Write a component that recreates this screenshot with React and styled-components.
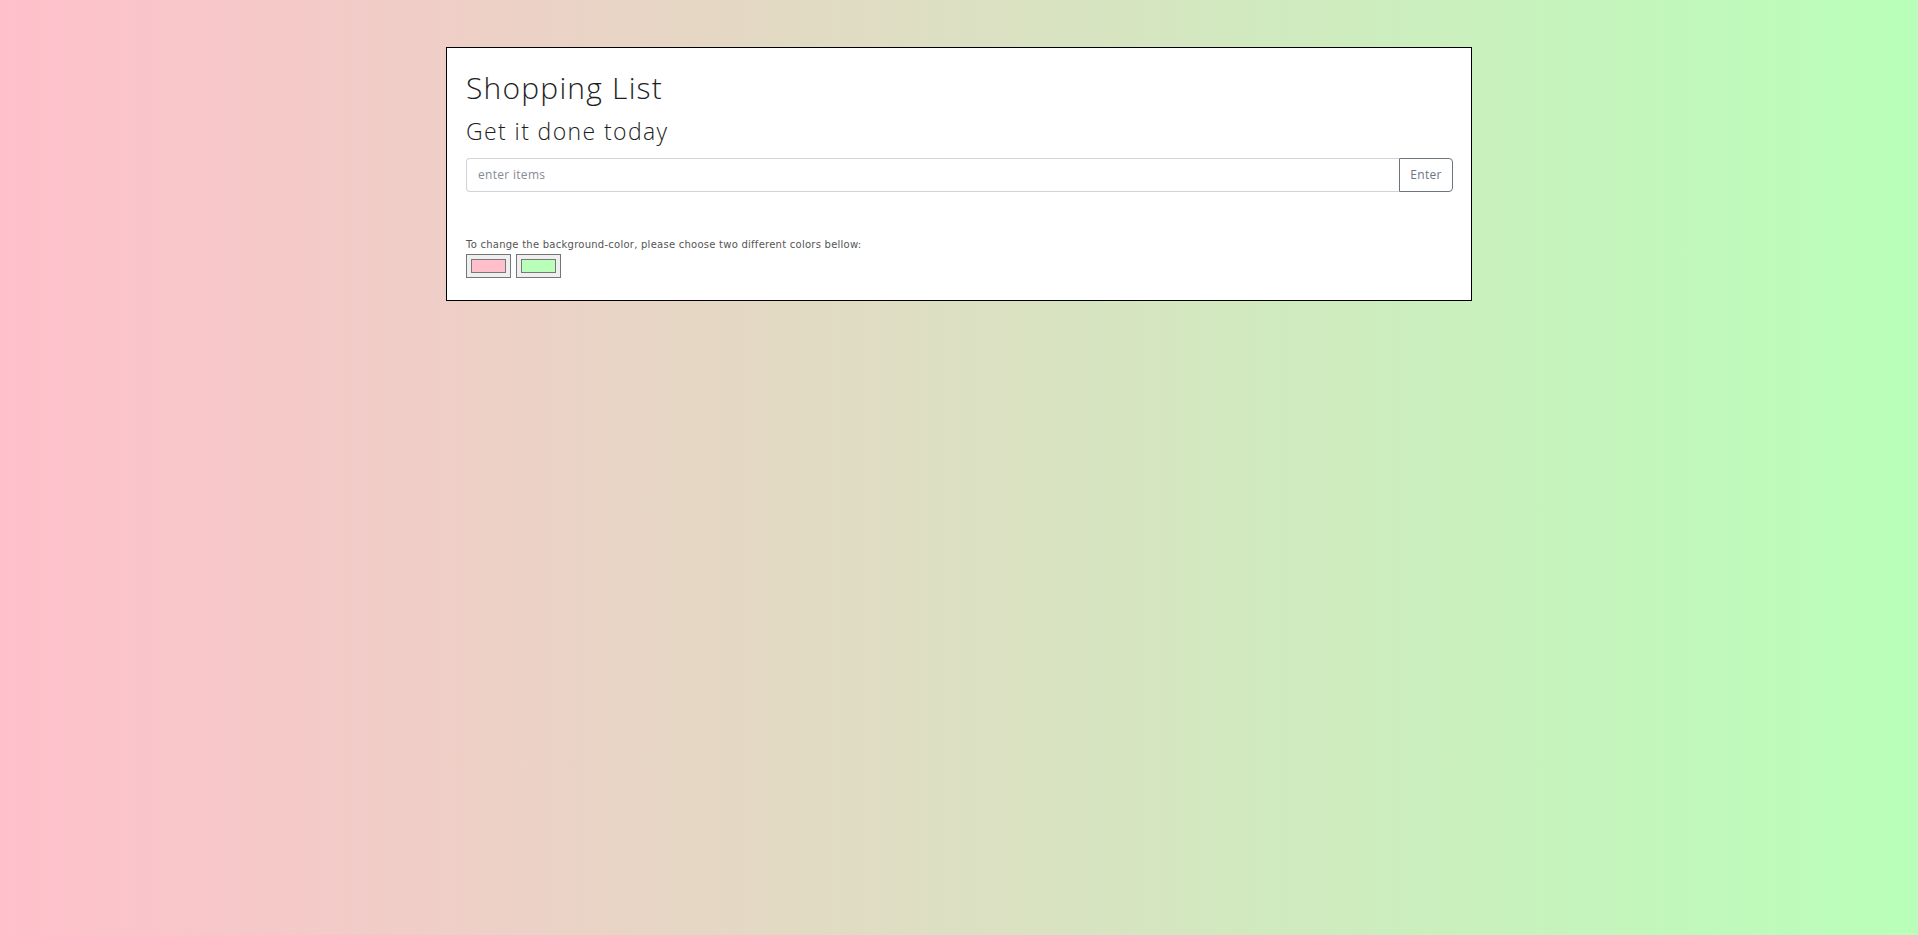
import React, { useState } from "react";
import styled, { createGlobalStyle } from "styled-components";

const GlobalStyle = createGlobalStyle`
  * { box-sizing: border-box; }
  html, body { margin: 0; height: 100%; }
  body {
    font-family: "Open Sans", "Lato", sans-serif;
    color: #212529;
  }
  #root { min-height: 100%; }
`;

const Page = styled.div`
  min-height: 100vh;
  background: linear-gradient(to right, ${(p) => p.$from}, ${(p) => p.$to});
  padding-top: 47px;
`;

const Card = styled.div`
  width: 1026px;
  margin: 0 auto;
  background: #ffffff;
  border: 1px solid #000;
  padding: 18px 18px 22px 19px;
`;

const Title = styled.h1`
  margin: 0;
  font-size: 30px;
  font-weight: 300;
  line-height: 1.2;
  letter-spacing: 1.2px;
  padding-top: 4px;
  color: #1e1e1e;
`;

const Subtitle = styled.h2`
  margin: 0;
  margin-top: 12px;
  font-size: 23px;
  font-weight: 300;
  line-height: 1.2;
  letter-spacing: 1.4px;
  color: #1e1e1e;
`;

const InputRow = styled.form`
  display: flex;
  margin-top: 12px;
  height: 34px;
`;

const TextInput = styled.input`
  flex: 1;
  height: 100%;
  border: 1px solid #ced4da;
  border-right: 0;
  border-radius: 4px 0 0 4px;
  padding: 0 11px;
  font-family: "Open Sans", sans-serif;
  font-size: 12px;
  letter-spacing: 0.3px;
  color: #495057;
  outline: none;

  &::placeholder {
    color: #858c93;
  }
`;

const EnterButton = styled.button`
  width: 54px;
  height: 100%;
  border: 1px solid #6c757d;
  border-radius: 0 4px 4px 0;
  background: #fff;
  color: #6c757d;
  font-family: "Open Sans", sans-serif;
  font-size: 12px;
  letter-spacing: 0.3px;
  padding: 0;
  cursor: pointer;
`;

const ItemList = styled.ul`
  margin: 0;
  padding: 0;
  min-height: 47px;
  list-style: none;
`;

const Hint = styled.p`
  margin: 0 0 4px;
  font-family: "DejaVu Sans", sans-serif;
  font-size: 10px;
  color: #555;
  letter-spacing: 0.25px;
`;

const Pickers = styled.div`
  display: flex;
  gap: 5px;
`;

const ColorInput = styled.input`
  width: 45px;
  height: 24px;
  padding: 1px 2px;
  border: 1px solid #767676;
  background: #efefef;
  cursor: pointer;

  &::-webkit-color-swatch-wrapper {
    padding: 3px 2px;
  }
  &::-webkit-color-swatch {
    border: 1px solid #777;
  }
`;

export default function App() {
  const [from, setFrom] = useState("#ffc0cb");
  const [to, setTo] = useState("#b9ffb9");
  const [items, setItems] = useState([]);
  const [text, setText] = useState("");

  const add = (e) => {
    e.preventDefault();
    if (!text.trim()) return;
    setItems([...items, text]);
    setText("");
  };

  return (
    <>
      <GlobalStyle />
      <Page $from={from} $to={to}>
        <Card>
          <Title>Shopping List</Title>
          <Subtitle>Get it done today</Subtitle>
          <InputRow onSubmit={add}>
            <TextInput
              placeholder="enter items"
              value={text}
              onChange={(e) => setText(e.target.value)}
            />
            <EnterButton type="submit">Enter</EnterButton>
          </InputRow>
          <ItemList>
            {items.map((item, i) => (
              <li key={i}>{item}</li>
            ))}
          </ItemList>
          <Hint>To change the background-color, please choose two different colors bellow:</Hint>
          <Pickers>
            <ColorInput type="color" value={from} onChange={(e) => setFrom(e.target.value)} />
            <ColorInput type="color" value={to} onChange={(e) => setTo(e.target.value)} />
          </Pickers>
        </Card>
      </Page>
    </>
  );
}
